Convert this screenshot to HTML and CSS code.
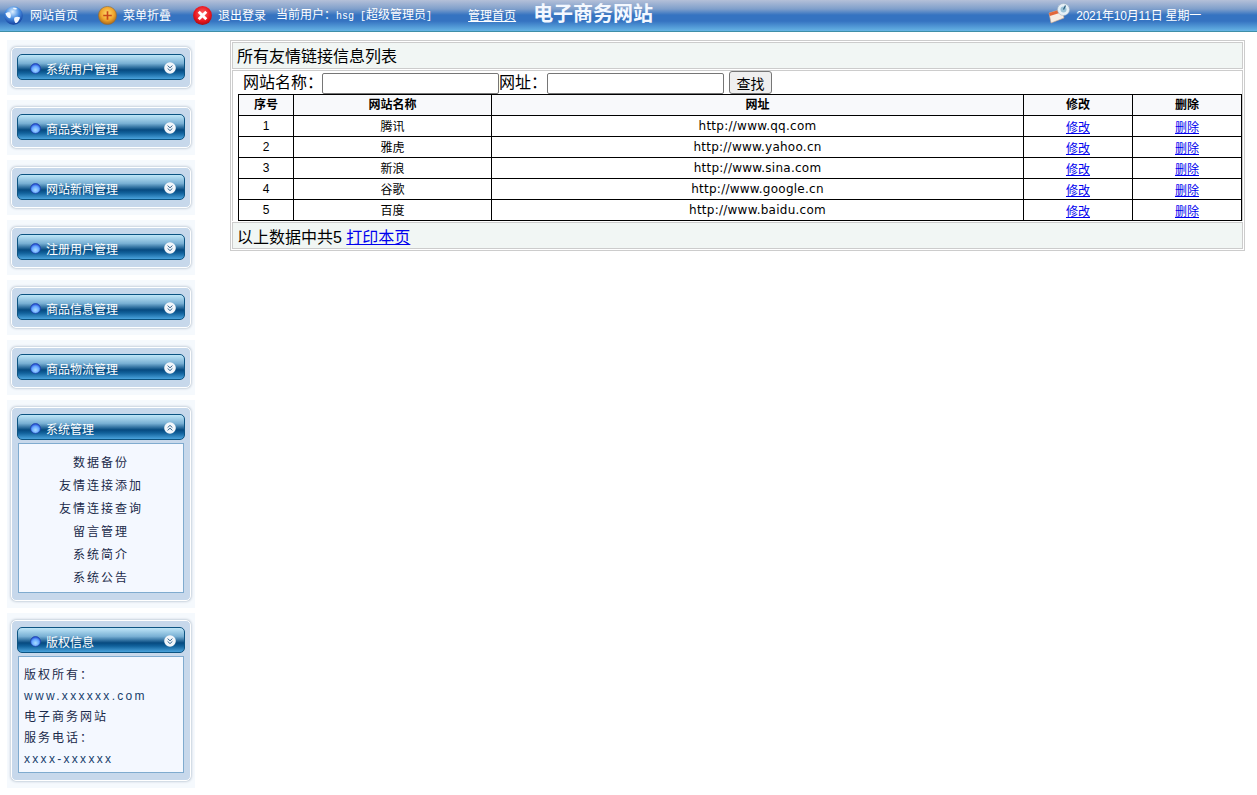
FILE: index.html
```html
<!DOCTYPE html>
<html lang="zh-CN">

<head>
    <meta charset="UTF-8">
    <title>电子商务网站</title>
    <link rel="stylesheet" href="styles.css">
</head>

<body>
    <svg class="defs" width="0" height="0">
        <defs>
            <radialGradient id="bulb" cx="50%" cy="65%" r="60%">
                <stop offset="0" stop-color="#a8dcff" />
                <stop offset="0.6" stop-color="#66a8ff" />
                <stop offset="1" stop-color="#2a55d8" />
            </radialGradient>
            <radialGradient id="globe" cx="45%" cy="30%" r="70%">
                <stop offset="0" stop-color="#dff1ff" />
                <stop offset="0.5" stop-color="#4a90e4" />
                <stop offset="1" stop-color="#123f9c" />
            </radialGradient>
            <radialGradient id="orange" cx="50%" cy="40%" r="60%">
                <stop offset="0" stop-color="#ffdc70" />
                <stop offset="0.6" stop-color="#f0a52c" />
                <stop offset="1" stop-color="#a8661a" />
            </radialGradient>
            <radialGradient id="red" cx="50%" cy="40%" r="60%">
                <stop offset="0" stop-color="#ff6a6a" />
                <stop offset="0.7" stop-color="#e8141c" />
                <stop offset="1" stop-color="#a80f16" />
            </radialGradient>
            <symbol id="bullet" viewBox="0 0 12 12">
                <circle cx="6" cy="6" r="5.4" fill="url(#bulb)" stroke="#1d3fa8" stroke-width="0.8" />
            </symbol>
            <symbol id="down" viewBox="0 0 12 12">
                <circle cx="6" cy="6" r="5.8" fill="#f2f6fa" />
                <path d="M3.600 3.600 6 5.800 8.400 3.600M3.600 6.400 6 8.600 8.400 6.400" fill="none" stroke="#33658f" stroke-width="1" />
            </symbol>
            <symbol id="up" viewBox="0 0 12 12">
                <circle cx="6" cy="6" r="5.8" fill="#f2f6fa" />
                <path d="M3.600 5.600 6 3.400 8.400 5.600M3.600 8.400 6 6.200 8.400 8.400" fill="none" stroke="#33658f" stroke-width="1" />
            </symbol>
        </defs>
    </svg>

    <header class="topbar">
        <svg class="top-icon icon-home" viewBox="0 0 20 20">
            <circle cx="10" cy="10" r="9.800" fill="url(#globe)" />
            <path d="M1.500 8c1-1 3-2 5-1 1 2 1 4 0 6-2 0-4-2-5-5zM11 12c2-1 4-1 6 0-1 3-3 6-5 6-1-2-2-4-1-6zM9 2c2-.5 4 0 5 1-1 1-3 1-5-1z" fill="#f2f8ff" />
        </svg>
        <span class="top-text home-text">网站首页</span>
        <svg class="top-icon icon-fold" viewBox="0 0 20 20">
            <circle cx="10" cy="10" r="9.600" fill="url(#orange)" stroke="#8c6a3a" stroke-width="0.6" />
            <path d="M10 5.500v9M5.500 10h9" stroke="#c8481a" stroke-width="1.800" />
        </svg>
        <span class="top-text fold-text">菜单折叠</span>
        <svg class="top-icon icon-exit" viewBox="0 0 20 20">
            <circle cx="10" cy="10" r="9.900" fill="url(#red)" />
            <path d="M6 6l8 8M14 6l-8 8" stroke="#fff" stroke-width="3" />
        </svg>
        <span class="top-text exit-text">退出登录</span>
        <span class="top-text user-text">当前用户：<span class="mono">hsg [</span>超级管理员<span class="mono">]</span></span>
        <a class="top-text admin-link" href="#">管理首页</a>
        <span class="site-title">电子商务网站</span>
        <svg class="top-icon icon-date" viewBox="0 0 23 22">
            <path d="M1 10l13-4 2 9-13 5z" fill="#f6ede4" stroke="#c9a48a" stroke-width="0.6" />
            <path d="M1 10l13-4 .8 3-13 4z" fill="#e2673a" />
            <circle cx="15.500" cy="6.500" r="6" fill="#e6f0f6" stroke="#9fb4c4" stroke-width="0.6" />
            <circle cx="15.500" cy="6.500" r="3" fill="#9cc4d8" />
            <path d="M15.500 6.500l2-4" stroke="#2b5d7c" stroke-width="1.200" />
        </svg>
        <span class="top-text date-text">2021年10月11日 星期一</span>
    </header>

    <div class="page">
        <aside class="sidebar">
            <div class="halo">
                <div class="panel">
                    <div class="panel-head">
                        <svg class="bullet"><use href="#bullet" /></svg>
                        <span class="panel-title">系统用户管理</span>
                        <svg class="chevron"><use href="#down" /></svg>
                    </div>
                </div>
            </div>
            <div class="halo">
                <div class="panel">
                    <div class="panel-head">
                        <svg class="bullet"><use href="#bullet" /></svg>
                        <span class="panel-title">商品类别管理</span>
                        <svg class="chevron"><use href="#down" /></svg>
                    </div>
                </div>
            </div>
            <div class="halo">
                <div class="panel">
                    <div class="panel-head">
                        <svg class="bullet"><use href="#bullet" /></svg>
                        <span class="panel-title">网站新闻管理</span>
                        <svg class="chevron"><use href="#down" /></svg>
                    </div>
                </div>
            </div>
            <div class="halo">
                <div class="panel">
                    <div class="panel-head">
                        <svg class="bullet"><use href="#bullet" /></svg>
                        <span class="panel-title">注册用户管理</span>
                        <svg class="chevron"><use href="#down" /></svg>
                    </div>
                </div>
            </div>
            <div class="halo">
                <div class="panel">
                    <div class="panel-head">
                        <svg class="bullet"><use href="#bullet" /></svg>
                        <span class="panel-title">商品信息管理</span>
                        <svg class="chevron"><use href="#down" /></svg>
                    </div>
                </div>
            </div>
            <div class="halo">
                <div class="panel">
                    <div class="panel-head">
                        <svg class="bullet"><use href="#bullet" /></svg>
                        <span class="panel-title">商品物流管理</span>
                        <svg class="chevron"><use href="#down" /></svg>
                    </div>
                </div>
            </div>
            <div class="halo">
                <div class="panel">
                    <div class="panel-head">
                        <svg class="bullet"><use href="#bullet" /></svg>
                        <span class="panel-title">系统管理</span>
                        <svg class="chevron"><use href="#up" /></svg>
                    </div>
                    <ul class="panel-menu">
                        <li>数据备份</li>
                        <li>友情连接添加</li>
                        <li>友情连接查询</li>
                        <li>留言管理</li>
                        <li>系统简介</li>
                        <li>系统公告</li>
                    </ul>
                </div>
            </div>
            <div class="halo">
                <div class="panel">
                    <div class="panel-head">
                        <svg class="bullet"><use href="#bullet" /></svg>
                        <span class="panel-title">版权信息</span>
                        <svg class="chevron"><use href="#down" /></svg>
                    </div>
                    <div class="panel-info">
                        <p>版权所有：</p>
                        <p class="wide">www.xxxxxx.com</p>
                        <p>电子商务网站</p>
                        <p>服务电话：</p>
                        <p class="wide">xxxx-xxxxxx</p>
                    </div>
                </div>
            </div>
        </aside>

        <main class="content">
            <div class="list-box">
                <div class="list-title">所有友情链接信息列表</div>
                <div class="list-body">
                    <form class="search">
                        <label class="search-name">网站名称：</label>
                        <input type="text">
                        <label>网址：</label>
                        <input type="text">
                        <button type="button">查找</button>
                    </form>
                    <table class="data">
                        <colgroup>
                            <col class="col-id">
                            <col class="col-name">
                            <col class="col-url">
                            <col class="col-edit">
                            <col class="col-del">
                        </colgroup>
                        <thead>
                            <tr>
                                <th>序号</th>
                                <th>网站名称</th>
                                <th>网址</th>
                                <th>修改</th>
                                <th>删除</th>
                            </tr>
                        </thead>
                        <tbody>
                            <tr>
                                <td>1</td>
                                <td class="name">腾讯</td>
                                <td class="url">http://www.qq.com</td>
                                <td class="action"><a href="#">修改</a></td>
                                <td class="action"><a href="#">删除</a></td>
                            </tr>
                            <tr>
                                <td>2</td>
                                <td class="name">雅虎</td>
                                <td class="url">http://www.yahoo.cn</td>
                                <td class="action"><a href="#">修改</a></td>
                                <td class="action"><a href="#">删除</a></td>
                            </tr>
                            <tr>
                                <td>3</td>
                                <td class="name">新浪</td>
                                <td class="url">http://www.sina.com</td>
                                <td class="action"><a href="#">修改</a></td>
                                <td class="action"><a href="#">删除</a></td>
                            </tr>
                            <tr>
                                <td>4</td>
                                <td class="name">谷歌</td>
                                <td class="url">http://www.google.cn</td>
                                <td class="action"><a href="#">修改</a></td>
                                <td class="action"><a href="#">删除</a></td>
                            </tr>
                            <tr>
                                <td>5</td>
                                <td class="name">百度</td>
                                <td class="url">http://www.baidu.com</td>
                                <td class="action"><a href="#">修改</a></td>
                                <td class="action"><a href="#">删除</a></td>
                            </tr>
                        </tbody>
                    </table>
                </div>
                <div class="list-foot">以上数据中共5 <a href="#">打印本页</a></div>
            </div>
        </main>
    </div>
</body>

</html>
```

FILE: styles.css
```css
* {
    box-sizing: border-box;
    margin: 0;
    padding: 0;
}

body {
    font-family: "Liberation Sans", "Noto Sans CJK SC", sans-serif;
    font-size: 12px;
    color: #000;
    background-color: #fff;
}

.defs {
    display: block;
    height: 0;
}

/* top bar */
.topbar {
    display: flex;
    align-items: center;
    height: 32px;
    padding-left: 4px;
    color: #fff;
    background: linear-gradient(#b4c0d8 0, #7f9fcb 9px, #3573c1 15px, #3573c1 21px, #66b4e4 31px);
    border-bottom: 1px solid #3f8fa8;
}

.top-icon {
    flex: none;
    width: 19px;
    height: 19px;
}

.top-text {
    line-height: 16px;
    color: #fff;
    white-space: nowrap;
}

.home-text {
    margin-left: 7px;
}

.icon-fold {
    margin-left: 20px;
}

.fold-text {
    margin-left: 6px;
}

.icon-exit {
    margin-left: 22px;
}

.exit-text {
    margin-left: 6px;
}

.user-text {
    margin-left: 10px;
}

.mono {
    font-family: "Liberation Mono", monospace;
    font-size: 10px;
}

.admin-link {
    margin-left: 36px;
    text-decoration: underline;
}

.site-title {
    margin-left: 17px;
    font-size: 20px;
    font-weight: bold;
    line-height: 24px;
    color: #f4f8ff;
    white-space: nowrap;
    position: relative;
    top: -2px;
}

.icon-date {
    width: 23px;
    height: 22px;
    margin-left: auto;
    margin-bottom: 3px;
}

.date-text {
    margin-left: 5px;
    margin-right: 56px;
    letter-spacing: -0.2px;
}

/* page */
.page {
    display: flex;
    align-items: flex-start;
}

.sidebar {
    flex: none;
    width: 230px;
    padding: 8px 0 0 7px;
}

.halo {
    width: 188px;
    padding: 7px 4px;
    margin-bottom: 5px;
    background-color: #f5f9fd;
}

.panel {
    padding: 6px 5px 7px;
    background-color: #c7d8eb;
    border: 1px solid #fff;
    border-radius: 5px;
    box-shadow: 0 0 3px #9aa9ba;
}

.panel-head {
    display: flex;
    align-items: center;
    height: 26px;
    padding: 0 8px 0 12px;
    border: 1px solid #0c5482;
    border-radius: 5px;
    background: linear-gradient(#bfe6f8 0, #79b0d4 35%, #2f6f9f 52%, #064a80 62%, #11619b 75%, #4aa3dc 100%);
}

.bullet {
    flex: none;
    width: 11px;
    height: 11px;
    margin-top: 2px;
}

.panel-title {
    flex: 1;
    margin-left: 5px;
    padding-top: 6px;
    line-height: 16px;
    color: #fff;
}

.chevron {
    flex: none;
    width: 12px;
    height: 12px;
    margin-top: 1px;
}

.panel-menu {
    margin: 3px 1px 0;
    padding: 8px 0 2px;
    list-style: none;
    text-align: center;
    letter-spacing: 2px;
    color: #1a2a4a;
    background-color: #f4f8ff;
    border: 1px solid #7fabcf;
}

.panel-menu li {
    height: 23px;
    line-height: 23px;
}

.panel-info {
    margin: 3px 1px 0;
    padding: 8px 5px 2px;
    letter-spacing: 2px;
    color: #1a2a4a;
    background-color: #f4f8ff;
    border: 1px solid #7fabcf;
}

.panel-info p {
    height: 21px;
    line-height: 21px;
}

.panel-info .wide {
    letter-spacing: 2.3px;
    color: #17406b;
}

/* main list */
.content {
    flex: 1;
    min-width: 0;
    padding: 8px 12px 0 0;
}

.list-box {
    padding: 1px;
    border: 1px solid #ccc;
}

.list-title {
    height: 27px;
    padding-left: 4px;
    font-size: 16px;
    line-height: 27px;
    background-color: #f1f6f4;
    border: 1px solid #ccc;
}

.list-body {
    margin-top: 1px;
    padding-left: 5px;
    border: 1px solid #ccc;
    border-bottom: 0;
}

.search {
    display: flex;
    align-items: flex-end;
    height: 23px;
    font-size: 16px;
    line-height: 22px;
}

.search-name {
    margin-left: 5px;
    width: 79px;
}

.search input {
    width: 177px;
    height: 21px;
    border: 1px solid #767676;
    border-radius: 2px;
    background-color: #fff;
}

.search label {
    white-space: nowrap;
}

.search input + label {
    width: 48px;
}

.search button {
    width: 43px;
    height: 23px;
    margin-left: 5px;
    font-family: inherit;
    font-size: 14px;
    background-color: #efefef;
    border: 1px solid #767676;
    border-radius: 3px;
}

.data {
    width: 1004px;
    table-layout: fixed;
    border-collapse: collapse;
    text-align: center;
}

.data th,
.data td {
    height: 21px;
    border: 1px solid #000;
    font-size: 12px;
    line-height: 16px;
}

.data th {
    background-color: #f8f9fb;
}

.data .name {
    padding-top: 2px;
}

.data .action {
    padding-top: 3px;
}

.data .url {
    font-family: "DejaVu Sans", sans-serif;
    letter-spacing: 0.25px;
}

.col-id {
    width: 55px;
}

.col-name {
    width: 198px;
}

.col-url {
    width: 532px;
}

.col-edit {
    width: 109px;
}

.list-foot {
    height: 27px;
    margin-top: 1px;
    padding-left: 4px;
    font-size: 16px;
    line-height: 29px;
    background-color: #f1f6f4;
    border: 1px solid #ccc;
}
```
